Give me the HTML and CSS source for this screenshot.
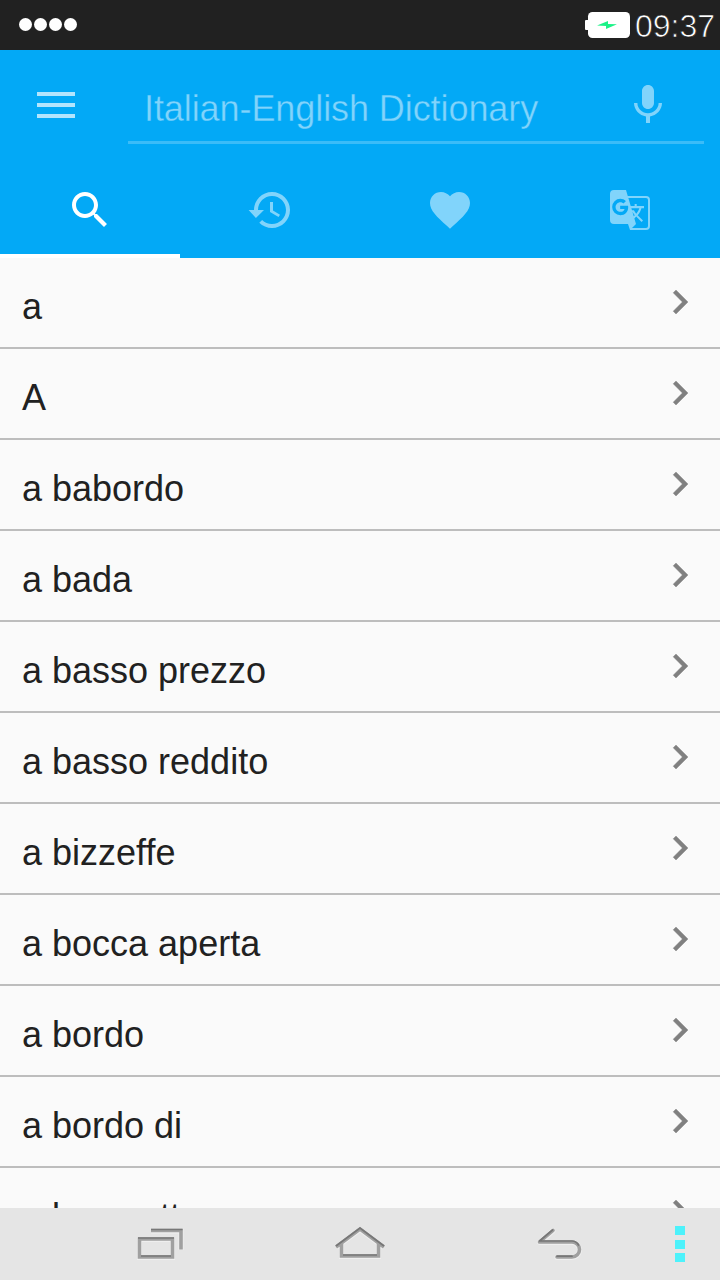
FILE: index.html
```html
<!DOCTYPE html>
<html lang="en">
<head>
    <meta charset="UTF-8">
    <meta name="viewport" content="width=device-width, initial-scale=1.0">
    <title>Italian-English Dictionary</title>
    <link rel="stylesheet" href="styles.css">
</head>
<body>
    <!-- Status bar -->
    <div class="status-bar">
        <div class="signal">
            <span></span>
            <span></span>
            <span></span>
            <span></span>
        </div>
        <div class="status-right">
            <svg class="battery" width="45" height="26" viewBox="0 0 45 26">
                <rect x="3" width="42" height="26" rx="4.5" fill="#fff"/>
                <rect y="8" width="5" height="10" rx="1" fill="#fff"/>
                <path d="M12 13.6L23 9v3l9 .2L21 17v-3z" fill="#1bf287"/>
            </svg>
            <span class="clock">09:37</span>
        </div>
    </div>

    <!-- Search header and tabs -->
    <header class="app-bar">
        <div class="search-row">
            <button class="menu-button" aria-label="Menu">
                <span></span>
                <span></span>
                <span></span>
            </button>
            <div class="search-field">
                <span class="search-hint">Italian-English Dictionary</span>
                <svg class="mic" width="48" height="48" viewBox="0 0 24 24"><path d="M12 14c1.66 0 2.99-1.34 2.99-3L15 5c0-1.66-1.34-3-3-3S9 3.34 9 5v6c0 1.66 1.34 3 3 3zm5.3-3c0 3-2.54 5.1-5.3 5.1S6.7 14 6.7 11H5c0 3.41 2.72 6.23 6 6.72V21h2v-3.28c3.28-.48 6-3.3 6-6.72h-1.7z"/></svg>
            </div>
        </div>
        <nav class="tabs">
            <a class="tab active">
                <svg width="48" height="48" viewBox="0 0 24 24"><path d="M15.5 14h-.79l-.28-.27C15.41 12.59 16 11.11 16 9.5 16 5.91 13.09 3 9.5 3S3 5.91 3 9.5 5.91 16 9.5 16c1.61 0 3.09-.59 4.23-1.57l.27.28v.79l5 4.99L20.49 19l-4.99-5zm-6 0C7.01 14 5 11.99 5 9.5S7.01 5 9.5 5 14 7.01 14 9.5 11.99 14 9.5 14z"/></svg>
            </a>
            <a class="tab">
                <svg width="48" height="48" viewBox="0 0 24 24"><path d="M13 3c-4.97 0-9 4.03-9 9H1.300l3.660 4.030L9 12H6c0-3.870 3.130-7 7-7s7 3.130 7 7-3.130 7-7 7c-1.930 0-3.680-.79-4.940-2.060l-1.420 1.420C8.270 19.990 10.510 21 13 21c4.970 0 9-4.030 9-9s-4.030-9-9-9zm-1 5v5l4.280 2.540.72-1.210-3.500-2.080V8H12z"/></svg>
            </a>
            <a class="tab">
                <svg width="48" height="48" viewBox="0 0 24 24"><path d="M12 21.35l-1.45-1.32C5.4 15.36 2 12.28 2 8.5 2 5.42 4.42 3 7.5 3c1.74 0 3.41.81 4.5 2.09C13.09 3.81 14.76 3 16.5 3 19.58 3 22 5.42 22 8.5c0 3.78-3.4 6.86-8.55 11.54L12 21.35z"/></svg>
            </a>
            <a class="tab">
                <svg width="48" height="48" viewBox="0 0 24 24"><path d="M20 5H10.88L10 2H4A2 2 0 0 0 2 4V17A2 2 0 0 0 4 19H11L12 22H20A2 2 0 0 0 22 20V7A2 2 0 0 0 20 5M7.17 14.59A4.09 4.09 0 0 1 3.08 10.5A4.09 4.09 0 0 1 7.17 6.41C8.21 6.41 9.16 6.78 9.91 7.5L10 7.54L8.75 8.72L8.69 8.67C8.4 8.4 7.91 8.08 7.17 8.08C5.86 8.08 4.79 9.17 4.79 10.5C4.79 11.83 5.86 12.92 7.17 12.92C8.54 12.92 9.13 12.05 9.29 11.46H7.08V9.91H11.03L11.04 10C11.08 10.19 11.09 10.38 11.09 10.59C11.09 12.94 9.5 14.59 7.17 14.59M13.2 12.88C13.53 13.5 13.94 14.06 14.39 14.58L13.85 15.11L13.2 12.88M13.97 12.12H13L12.67 11.08H16.66C16.66 11.08 16.32 12.39 15.1 13.82C14.58 13.2 14.21 12.59 13.97 12.12M21 20A1 1 0 0 1 20 21H13L15 19L14.19 16.23L15.11 15.31L17.79 18L18.5 17.27L15.81 14.59C16.71 13.56 17.41 12.34 17.73 11.08H19V10.04H15.36V9H14.32V10.04H12.36L11.18 6H20A1 1 0 0 1 21 7V20Z"/></svg>
            </a>
        </nav>
    </header>

    <!-- Shared chevron -->
    <svg class="defs" width="0" height="0">
        <symbol id="chevron" viewBox="0 0 24 24"><path d="M10 6L8.59 7.41 13.17 12l-4.58 4.59L10 18l6-6z"/></symbol>
    </svg>

    <ul class="word-list">
        <li><span>a</span><svg class="chevron"><use href="#chevron"/></svg></li>
        <li><span>A</span><svg class="chevron"><use href="#chevron"/></svg></li>
        <li><span>a babordo</span><svg class="chevron"><use href="#chevron"/></svg></li>
        <li><span>a bada</span><svg class="chevron"><use href="#chevron"/></svg></li>
        <li><span>a basso prezzo</span><svg class="chevron"><use href="#chevron"/></svg></li>
        <li><span>a basso reddito</span><svg class="chevron"><use href="#chevron"/></svg></li>
        <li><span>a bizzeffe</span><svg class="chevron"><use href="#chevron"/></svg></li>
        <li><span>a bocca aperta</span><svg class="chevron"><use href="#chevron"/></svg></li>
        <li><span>a bordo</span><svg class="chevron"><use href="#chevron"/></svg></li>
        <li><span>a bordo di</span><svg class="chevron"><use href="#chevron"/></svg></li>
        <li><span>a braccetto</span><svg class="chevron"><use href="#chevron"/></svg></li>
    </ul>

    <!-- System navigation -->
    <div class="nav-bar">
        <div class="nav-item">
            <svg width="60" height="48" viewBox="0 0 60 48">
                <path class="nav-light" d="M21 11h30v19M9.500 19.500h33v18h-33z"/>
                <path class="nav-line" d="M21 10.500h30v19M9.500 19h33v18h-33z"/>
                <path class="nav-edge" d="M21 9.500h31.500M8 18h36M11 36h30"/>
            </svg>
        </div>
        <div class="nav-item">
            <svg width="64" height="48" viewBox="0 0 64 48">
                <path class="nav-light" d="M8 27.500L32 9.500l24 18M13.500 24v12.500h37V24"/>
                <path class="nav-line" d="M8 27L32 9l24 18M13.500 24v12h37V24"/>
                <path class="nav-edge" d="M8 26L32 8l24 18M15 35h34"/>
            </svg>
        </div>
        <div class="nav-item nav-back">
            <svg width="60" height="48" viewBox="0 0 60 48">
                <path class="nav-light" d="M23 11L9.500 22.500H42a7.500 7.500 0 0 1 0 15H27"/>
                <path class="nav-line" d="M23 10.500L9.500 22H42a7.500 7.500 0 0 1 0 15H27"/>
                <path class="nav-edge" d="M22.500 10L9.500 21H42a8 8 0 0 1 6.500 4M27 36.200h15"/>
            </svg>
        </div>
        <div class="nav-more">
            <span></span>
            <span></span>
            <span></span>
        </div>
    </div>
</body>
</html>
```
FILE: styles.css
```css
* {
    box-sizing: border-box;
}
body {
    display: flex;
    flex-direction: column;
    height: 1280px;
    margin: 0;
    overflow: hidden;
    background-color: #fafafa;
    font-family: "Liberation Sans", Arial, sans-serif;
    color: #212121;
}
svg {
    display: block;
    flex: none;
}
.defs {
    position: absolute;
}

/* Status bar */
.status-bar {
    display: flex;
    justify-content: space-between;
    align-items: center;
    flex: none;
    height: 50px;
    padding: 0 5px 0 19px;
    background-color: #212121;
}
.signal {
    display: flex;
    gap: 2px;
    margin-bottom: 1px;
}
.signal span {
    width: 13px;
    height: 13px;
    border-radius: 50%;
    background-color: #fff;
}
.status-right {
    display: flex;
    align-items: center;
    gap: 5px;
}
.clock {
    margin-top: 1px;
    font-size: 32px;
    line-height: 50px;
    color: #fff;
    /* thins the strokes down to a light weight */
    -webkit-text-stroke: 0.7px #212121;
}

/* App bar */
.app-bar {
    flex: none;
    height: 208px;
    background-color: #03a9f6;
}
.search-row {
    display: flex;
    height: 112px;
    padding: 0 16px 0 37px;
}
.menu-button {
    display: flex;
    flex-direction: column;
    gap: 7px;
    width: 38px;
    margin: 42px 53px 0 0;
    padding: 0;
    border: none;
    background: none;
}
.menu-button span {
    width: 38px;
    height: 4px;
    background-color: #b3e5fd;
}
.search-field {
    display: flex;
    justify-content: space-between;
    flex: 1;
    height: 94px;
    padding: 31px 32px 0 16px;
    border-bottom: 3px solid #3bbcf8;
}
.search-hint {
    font-size: 36px;
    line-height: 56px;
    letter-spacing: -0.08px;
    white-space: nowrap;
    color: #81d4fb;
    -webkit-text-stroke: 0.4px #03a9f6;
}
.mic {
    fill: #81d4fb;
}
.tabs {
    display: grid;
    grid-template-columns: repeat(4, 1fr);
    height: 96px;
}
.tab {
    display: flex;
    justify-content: center;
    align-items: center;
    border-top: 4px solid transparent;
    border-bottom: 4px solid transparent;
    fill: #81d4fb;
}
.tab.active {
    border-bottom-color: #fff;
    fill: #fff;
}

/* Word list */
.word-list {
    flex: 1;
    min-height: 0;
    margin: 0;
    padding: 0;
    overflow: hidden;
    list-style: none;
}
.word-list li {
    display: flex;
    justify-content: space-between;
    height: 91px;
    padding: 0 16px 0 22px;
    border-bottom: 2px solid #bdbdbd;
    font-size: 36px;
    line-height: 97px;
}
.chevron {
    width: 48px;
    height: 48px;
    margin-top: 19.5px;
    fill: #808080;
    stroke: #808080;
    stroke-width: 0.2;
}

/* System navigation */
.nav-bar {
    display: flex;
    flex: none;
    height: 72px;
    padding: 12px 0 0 130px;
    background-color: #e5e5e5;
}
.nav-item {
    margin-right: 138px;
}
.nav-back {
    margin-right: 85px;
}
.nav-bar path {
    fill: none;
}
.nav-back path {
    stroke-linecap: round;
    stroke-linejoin: round;
}
.nav-light {
    stroke: #efefef;
    stroke-width: 5;
}
.nav-line {
    stroke: #a0a0a0;
    stroke-width: 3.6;
}
.nav-edge {
    stroke: #777;
    stroke-width: 1.7;
}
.nav-more {
    display: flex;
    flex-direction: column;
    gap: 4.5px;
    padding-top: 6px;
}
.nav-more span {
    width: 10px;
    height: 9px;
    background-color: #4df2fb;
}
```
